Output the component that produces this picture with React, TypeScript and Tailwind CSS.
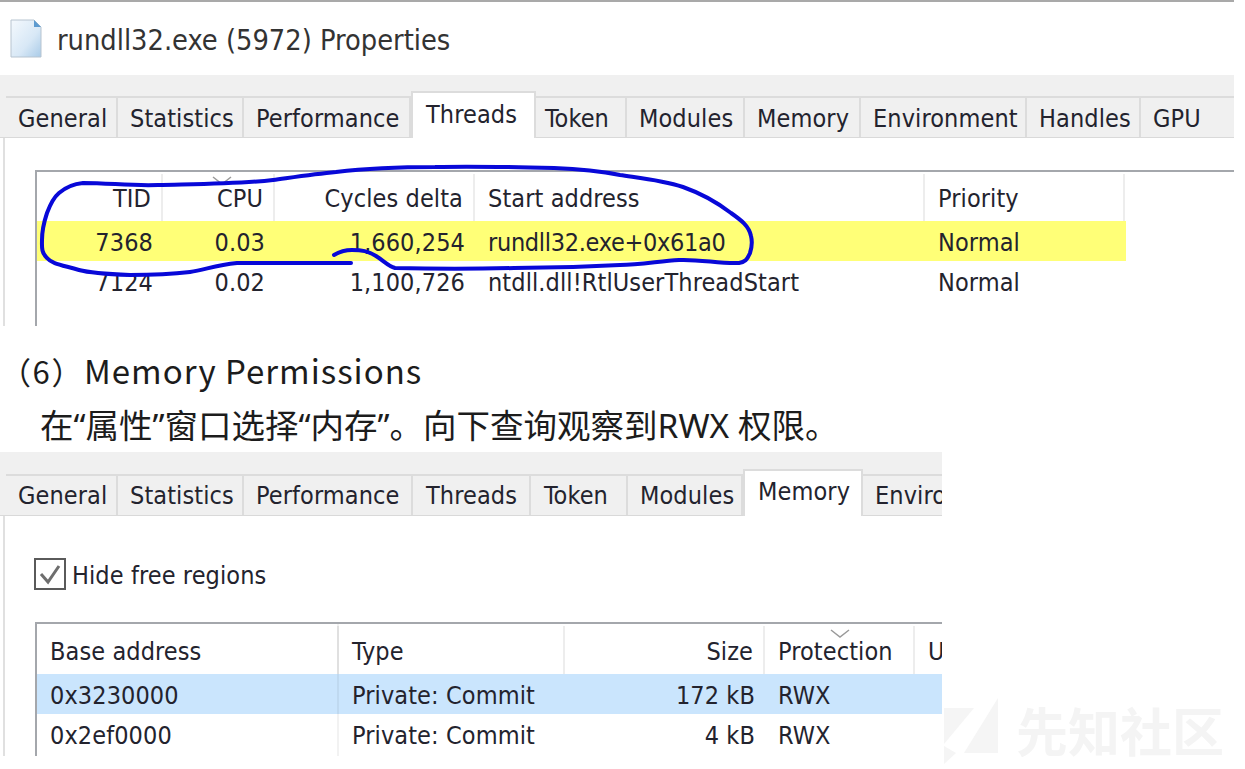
import React from "react";

const ui = "font-['DejaVu_Sans','Noto_Sans',sans-serif] [font-stretch:condensed] text-[25px] leading-none tracking-[0.1px] text-[#23232e]";

type Tab = { label: string; w: string; pl?: string; active?: boolean; last?: boolean };

function TabStrip({ tabs, h, idle, lifted }: { tabs: Tab[]; h: string; idle: string; lifted: string }) {
  return (
    <div className={`${h} bg-[#f0f0f0] flex items-end pl-[6px] border-b border-[#d9d9d9]`}>
      {tabs.map((t) => (
        <div
          key={t.label}
          className={`${t.w} ${t.pl ?? "pl-[12px]"} shrink-0 overflow-hidden whitespace-nowrap flex items-center border-t-2 border-[#dcdcdc] ${
            t.active
              ? `h-[47px] bg-white border-x-2 -mb-px ${lifted}`
              : t.last
              ? `h-[41px] ${idle}`
              : `h-[41px] border-r-2 ${idle}`
          }`}
        >
          {t.label}
        </div>
      ))}
      <div className="flex-1 h-[41px] border-t-2 border-[#dcdcdc]" />
    </div>
  );
}

type Col = { w: string; right?: boolean; pad: string; divider?: boolean };

function Row({ cols, cells, className, cell }: { cols: Col[]; cells: React.ReactNode[]; className: string; cell?: string }) {
  return (
    <div className={`flex items-center ${className}`}>
      {cols.map((c, i) => (
        <div
          key={i}
          className={`${c.w} ${c.pad} shrink-0 h-full pt-[2px] flex items-center whitespace-nowrap ${c.right ? "justify-end" : ""} ${
            cell && c.divider ? cell : ""
          }`}
        >
          {cells[i]}
        </div>
      ))}
    </div>
  );
}

function Chevron({ className }: { className: string }) {
  return (
    <svg className={`absolute ${className}`} width="20" height="10" viewBox="0 0 20 10" fill="none">
      <path d="M1 1 L10 8 L19 1" stroke="#9a9a9a" strokeWidth="1.5" />
    </svg>
  );
}

const threadCols: Col[] = [
  { w: "w-[126px]", right: true, pad: "pr-[10px]", divider: true },
  { w: "w-[112px]", right: true, pad: "pr-[10px]", divider: true },
  { w: "w-[200px]", right: true, pad: "pr-[10px]", divider: true },
  { w: "w-[450px]", pad: "pl-[13px]", divider: true },
  { w: "w-[200px]", pad: "pl-[13px]", divider: true },
];

const memCols: Col[] = [
  { w: "w-[302px]", pad: "pl-[13px]", divider: true },
  { w: "w-[226px]", pad: "pl-[13px]", divider: true },
  { w: "w-[200px]", right: true, pad: "pr-[10px]", divider: true },
  { w: "w-[150px]", pad: "pl-[13px]", divider: true },
  { w: "w-[40px]", pad: "pl-[13px]" },
];

const tabs1: Tab[] = [
  { label: "General", w: "w-[112px]" },
  { label: "Statistics", w: "w-[126px]" },
  { label: "Performance", w: "w-[167px]" },
  { label: "Threads", w: "w-[125px]", pl: "pl-[13px]", active: true },
  { label: "Token", w: "w-[91px]", pl: "pl-[9px]" },
  { label: "Modules", w: "w-[118px]" },
  { label: "Memory", w: "w-[116px]" },
  { label: "Environment", w: "w-[166px]" },
  { label: "Handles", w: "w-[114px]" },
  { label: "GPU", w: "w-[80px]", last: true },
];

const tabs2: Tab[] = [
  { label: "General", w: "w-[112px]" },
  { label: "Statistics", w: "w-[126px]" },
  { label: "Performance", w: "w-[169px]" },
  { label: "Threads", w: "w-[118px]", pl: "pl-[13px]" },
  { label: "Token", w: "w-[97px]", pl: "pl-[13px]" },
  { label: "Modules", w: "w-[115px]" },
  { label: "Memory", w: "w-[120px]", pl: "pl-[13px]", active: true },
  { label: "Environment", w: "w-[79px]", last: true },
];

export default function App() {
  return (
    <div className="relative w-[1245px] h-[769px] bg-white overflow-hidden">
      {/* first capture */}
      <section className={`relative w-[1234px] h-[326px] overflow-hidden ${ui}`}>
        <header className="h-[75px] border-t-2 border-[#a9a9a9] flex items-center pl-[9px] gap-[14px]">
          <svg width="34" height="40" viewBox="0 0 34 40">
            <defs>
              <linearGradient id="doc" x1="0" y1="0" x2="1" y2="1">
                <stop offset="0" stopColor="#f4f9fd" />
                <stop offset="0.6" stopColor="#d8e8f6" />
                <stop offset="1" stopColor="#a9cbe8" />
              </linearGradient>
            </defs>
            <path d="M2 1 H25 L32 8 V38 H2 Z" fill="url(#doc)" stroke="#b7c4d0" strokeWidth="1" />
            <path d="M25 1 L32 8 H25 Z" fill="#5d9bd0" />
          </svg>
          <span className="pt-[4px] text-[28.7px] tracking-normal text-[#333]">rundll32.exe (5972) Properties</span>
        </header>
        <TabStrip h="h-[63px]" tabs={tabs1} idle="pt-[1px]" lifted="pb-[3px]" />
        <div className="h-[188px] ml-[3px] border-l-2 border-[#e0e0e0] pt-[32px] pl-[30px]">
          <div className="relative h-[156px] border-l-2 border-t-2 border-[#a4a7ac] pt-[2px]">
            <Row cols={threadCols} cells={["TID", "CPU", "Cycles delta", "Start address", "Priority"]} className="h-[47px]" cell="border-r-2 border-[#ededed]" />
            <Row cols={threadCols} cells={["7368", "0.03", "1,660,254", <span className="tracking-[-0.3px]">rundll32.exe+0x61a0</span>, "Normal"]} className="h-[40px] w-[1089px] bg-[#ffff77]" />
            <Row cols={threadCols} cells={["7124", "0.02", "1,100,726", "ntdll.dll!RtlUserThreadStart", "Normal"]} className="h-[40px]" />
            <Chevron className="left-[175px] top-[4px]" />
          </div>
        </div>
        <svg className="absolute left-0 top-0 pointer-events-none" width="1234" height="326" fill="none">
          <path
            d="M351 263 L237 263 C215 265 205 270 190 272 C165 275 150 275 130 275 C105 274 90 273 79 270 C62 265 52 264 47 258 C41 252 42 247 42 240 C42 230 44 222 47 213 C50 205 53 198 59 193 C66 187 73 184 83 183 C110 183 130 186 158 185 C200 184 240 184 273 180 C295 177 315 174 336 172 C370 168 405 167 435 167 C475 166 515 167 554 168 C580 169 600 171 620 175 C640 178 662 180 683 187 C700 193 718 203 731 213 C741 220 749 226 751 236 C753 244 751 250 750 253 C747 260 745 262 739 263 C720 264 700 259 679 260 C660 261 640 265 620 265 C585 267 550 268 514 268 C475 269 435 269 395 268 C388 266 384 261 376 256 C368 251 362 250 352 250 C344 250 339 252 334 255"
            stroke="#0808d8"
            strokeWidth="4"
            strokeLinecap="round"
            strokeLinejoin="round"
          />
        </svg>
      </section>

      {/* article text */}
      <div className="h-[126px] font-['Noto_Sans','Noto_Sans_CJK_SC',sans-serif] text-[#1c1c1c]">
        <p className="h-[74px] pt-[21px] text-[33px] leading-[46px] tracking-[1px] whitespace-nowrap font-['Noto_Sans_CJK_SC',sans-serif]">
          <span className="text-[31px] tracking-[1.6px]">（6）</span>Memory Permissions
        </p>
        <p className="h-[52px] pt-[2px] pl-[40px] text-[33.5px] leading-[46px] whitespace-nowrap">在“属性”窗口选择“内存”。向下查询观察到RWX 权限。</p>
      </div>

      {/* second capture */}
      <section className={`relative w-[942px] h-[304px] overflow-hidden ${ui}`}>
        <TabStrip h="h-[64px]" tabs={tabs2} idle="pb-[1px]" lifted="pb-[5px]" />
        <div className="h-[240px] ml-[3px] border-l-2 border-[#e0e0e0] pl-[30px]">
          <div className="h-[106px] flex items-start pt-[42px] gap-[6px] -ml-[1px]">
            <div className="w-[32px] h-[32px] border-2 border-[#5a5a5a] flex items-center justify-center bg-white">
              <svg width="24" height="24" viewBox="0 0 24 24" fill="none">
                <path d="M3 12 L10 20 L21 4" stroke="#6e6e6e" strokeWidth="3" />
              </svg>
            </div>
            <span className="pt-[5px]">Hide free regions</span>
          </div>
          <div className="relative h-[134px] border-l-2 border-t-2 border-[#a4a7ac] pt-[2px] whitespace-nowrap">
            <Row cols={memCols} cells={["Base address", "Type", "Size", "Protection", "U"]} className="h-[48px]" cell="border-r-2 border-[#ededed]" />
            <Row cols={memCols} cells={["0x3230000", "Private: Commit", "172 kB", "RWX", ""]} className="h-[40px] bg-[#cae5fd]" />
            <Row cols={memCols} cells={["0x2ef0000", "Private: Commit", "4 kB", "RWX", ""]} className="h-[40px]" />
            <Chevron className="left-[793px] top-[5px]" />
            <div className="absolute left-[300px] top-0 bottom-0 border-l-2 border-[#000]/5" />
          </div>
        </div>
      </section>

      {/* watermark */}
      <div className="absolute left-[944px] top-[696px] flex items-center gap-[16px] text-[#f4f4f4]">
        <svg width="56" height="68" viewBox="0 0 56 68">
          <path d="M0 12 H30 L0 48 Z M54 2 V57 H20 Z M0 50 L12 57 L0 68 Z" fill="#f5f5f5" />
        </svg>
        <span className="font-['Noto_Sans_CJK_SC',sans-serif] font-bold text-[52px] leading-none">先知社区</span>
      </div>
    </div>
  );
}
